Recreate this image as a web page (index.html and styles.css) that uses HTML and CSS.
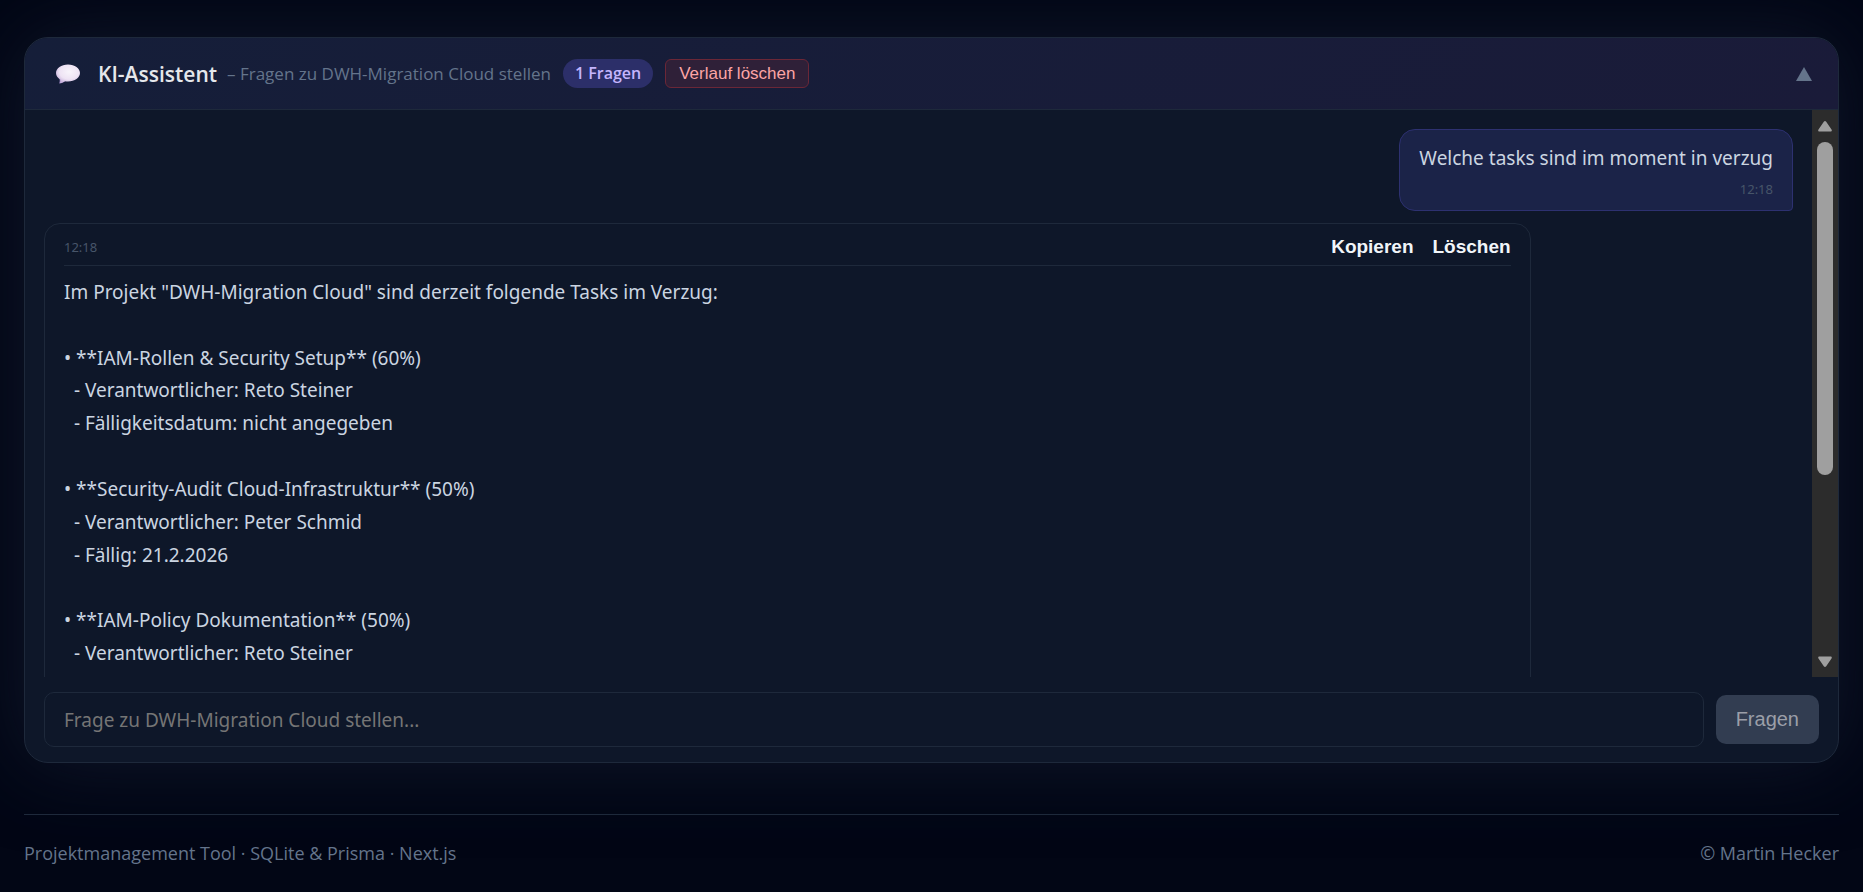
FILE: index.html
```
<!DOCTYPE html>
<html lang="de">
<head>
<meta charset="utf-8">
<title>KI-Assistent</title>
<link rel="stylesheet" href="styles.css">
</head>
<body>
<main class="assistant">
  <header class="assistant-header">
    <svg class="bubble-icon" viewBox="0 0 26 20" aria-hidden="true">
      <defs>
        <radialGradient id="shine" cx="55%" cy="40%" r="62%">
          <stop offset="0" stop-color="#f8f4fb"/>
          <stop offset="0.65" stop-color="#eee3f4"/>
          <stop offset="1" stop-color="#c9b3dc"/>
        </radialGradient>
      </defs>
      <path fill="#a58fca" d="M4 13.500c1 2.200.9 4.200.2 5.900 2.600-.1 4.900-1.100 6.600-2.900z"/>
      <path fill="url(#shine)" d="M13 .5c6.800 0 12 3.700 12 8.500s-5.200 8.500-12 8.500c-1.200 0-2.300-.1-3.400-.3-1.400 1-2.800 1.500-4.500 1.700.5-1.100.6-2.200.3-3.300C2.700 14.100 1 11.700 1 9 1 4.200 6.200.5 13 .5z"/>
    </svg>
    <h1 class="title">KI-Assistent</h1>
    <span class="subtitle">– Fragen zu DWH-Migration Cloud stellen</span>
    <span class="count">1 Fragen</span>
    <button class="clear" type="button">Verlauf löschen</button>
    <button class="toggle" type="button" aria-label="Einklappen">
      <svg class="toggle-icon" viewBox="0 0 16 14" aria-hidden="true"><path fill="#64748b" d="M8 0l8 14H0z"/></svg>
    </button>
  </header>

  <section class="history">
    <div class="messages">
      <article class="message question">
        <p class="text">Welche tasks sind im moment in verzug</p>
        <time class="time">12:18</time>
      </article>
      <article class="message answer">
        <div class="answer-bar">
          <time class="time">12:18</time>
          <div class="actions">
            <button class="action" type="button">Kopieren</button>
            <button class="action" type="button">Löschen</button>
          </div>
        </div>
        <p class="text">Im Projekt "DWH-Migration Cloud" sind derzeit folgende Tasks im Verzug:

• **IAM-Rollen &amp; Security Setup** (60%)
  - Verantwortlicher: Reto Steiner
  - Fälligkeitsdatum: nicht angegeben

• **Security-Audit Cloud-Infrastruktur** (50%)
  - Verantwortlicher: Peter Schmid
  - Fällig: 21.2.2026

• **IAM-Policy Dokumentation** (50%)
  - Verantwortlicher: Reto Steiner</p>
      </article>
    </div>
    <div class="scrollbar" aria-hidden="true">
      <svg class="arrow" viewBox="0 0 14 11"><path fill="#9f9f9f" d="M5.800.8a1.500 1.500 0 0 1 2.400 0l5.300 7.700c.7 1 .2 2-1 2h-11c-1.200 0-1.700-1-1-2z"/></svg>
      <div class="track"><div class="thumb"></div></div>
      <svg class="arrow" viewBox="0 0 14 11"><path fill="#9f9f9f" d="M5.800 10.200a1.500 1.500 0 0 0 2.400 0l5.300-7.700c.7-1 .2-2-1-2h-11c-1.200 0-1.700 1-1 2z"/></svg>
    </div>
  </section>

  <form class="ask">
    <input class="ask-input" type="text" aria-label="Frage" placeholder="Frage zu DWH-Migration Cloud stellen...">
    <button class="ask-button" type="button">Fragen</button>
  </form>
</main>

<footer class="footer">
  <span>Projektmanagement Tool · SQLite &amp; Prisma · Next.js</span>
  <span>© Martin Hecker</span>
</footer>
</body>
</html>
```
FILE: styles.css
```
* {
  box-sizing: border-box;
}

body {
  margin: 0;
  padding: 37px 24px 0;
  min-height: 100vh;
  overflow: hidden;
  background: #020615;
  color: #e5e7eb;
  font-family: "Noto Sans", "Open Sans", sans-serif;
  font-size: 19px;
}

button,
input {
  margin: 0;
  padding: 0;
  border: 0;
  background: none;
  font-family: "Liberation Sans", Arial, sans-serif;
}

h1,
p {
  margin: 0;
}

.assistant {
  display: flex;
  flex-direction: column;
  border: 1px solid #1e293b;
  border-radius: 24px;
  overflow: hidden;
  background: #0e1729;
  box-shadow: 0 0 80px #0f172a;
}

.assistant-header {
  display: flex;
  align-items: center;
  height: 72px;
  padding: 0 26px 0 30px;
  border-bottom: 1px solid #1e293b;
  background: linear-gradient(135deg, #151e39, #1a1b39);
}

.bubble-icon {
  width: 26px;
  height: 20px;
  margin-right: 17px;
}

.title {
  margin-right: 10px;
  font-family: "Open Sans", "Noto Sans", sans-serif;
  font-size: 21px;
  font-weight: 600;
}

.subtitle {
  margin-right: 12px;
  color: #64748b;
  font-family: "Open Sans", "Noto Sans", sans-serif;
  font-size: 17px;
}

.count {
  margin-right: 12px;
  padding: 0 12px;
  border-radius: 15px;
  background: #2c2f69;
  color: #c4b5fd;
  font-family: "Open Sans", "Noto Sans", sans-serif;
  font-size: 16px;
  font-weight: 600;
  line-height: 29px;
}

.clear {
  height: 29px;
  padding: 0 13px;
  border: 1px solid #6b2737;
  border-radius: 6px;
  background: #2f2038;
  color: #fca5a5;
  font-size: 17px;
}

.toggle {
  display: flex;
  margin-left: auto;
}

.toggle-icon {
  width: 16px;
  height: 14px;
}

.history {
  display: flex;
  height: 567px;
}

.messages {
  display: flex;
  flex: 1;
  flex-direction: column;
  gap: 12px;
  padding: 19px;
  overflow: hidden;
}

.message {
  flex-shrink: 0;
  padding: 12px 19px;
  border: 1px solid #1e293b;
}

.text {
  color: #cbd5e1;
  line-height: 1.73;
  white-space: pre-wrap;
}

.time {
  color: #475569;
  font-size: 13px;
  line-height: 18px;
}

.question {
  display: flex;
  flex-direction: column;
  align-self: flex-end;
  border-color: #2d3170;
  border-radius: 16px 16px 4px 16px;
  background: #1b2348;
}

.question .time {
  margin-top: 5px;
  text-align: right;
}

.answer {
  width: 85%;
  padding-bottom: 48px;
  border-radius: 16px 16px 16px 4px;
}

.answer-bar {
  display: flex;
  align-items: center;
  justify-content: space-between;
  margin-bottom: 10px;
  padding-bottom: 7px;
  border-bottom: 1px solid #1e293b;
}

.actions {
  display: flex;
  gap: 19px;
}

.action {
  color: #f1f5f9;
  font-size: 19px;
  font-weight: 700;
  line-height: 22px;
}

.scrollbar {
  display: flex;
  flex-direction: column;
  align-items: center;
  width: 26px;
  padding: 11px 0 10px;
  background: #2c2c2c;
}

.arrow {
  width: 14px;
  height: 11px;
}

.track {
  flex: 1;
  padding: 10px 0;
}

.thumb {
  width: 16px;
  height: 66%;
  border-radius: 8px;
  background: #9f9f9f;
}

.ask {
  display: flex;
  align-items: center;
  gap: 12px;
  padding: 15px 19px;
}

.ask-input {
  flex: 1;
  height: 55px;
  padding: 0 19px;
  border: 1px solid #1e293b;
  border-radius: 10px;
  color: #e5e7eb;
  font-family: "Noto Sans", "Open Sans", sans-serif;
  font-size: 19px;
}

.ask-input::placeholder {
  color: #757575;
}

.ask-button {
  height: 49px;
  padding: 0 20px;
  border-radius: 10px;
  background: #323d51;
  color: #9b9fa8;
  font-size: 20px;
}

.footer {
  display: flex;
  justify-content: space-between;
  margin-top: 51px;
  padding-top: 26px;
  border-top: 1px solid #1e293b;
  color: #64748b;
  font-family: "Open Sans", "Noto Sans", sans-serif;
  font-size: 18px;
}
```
